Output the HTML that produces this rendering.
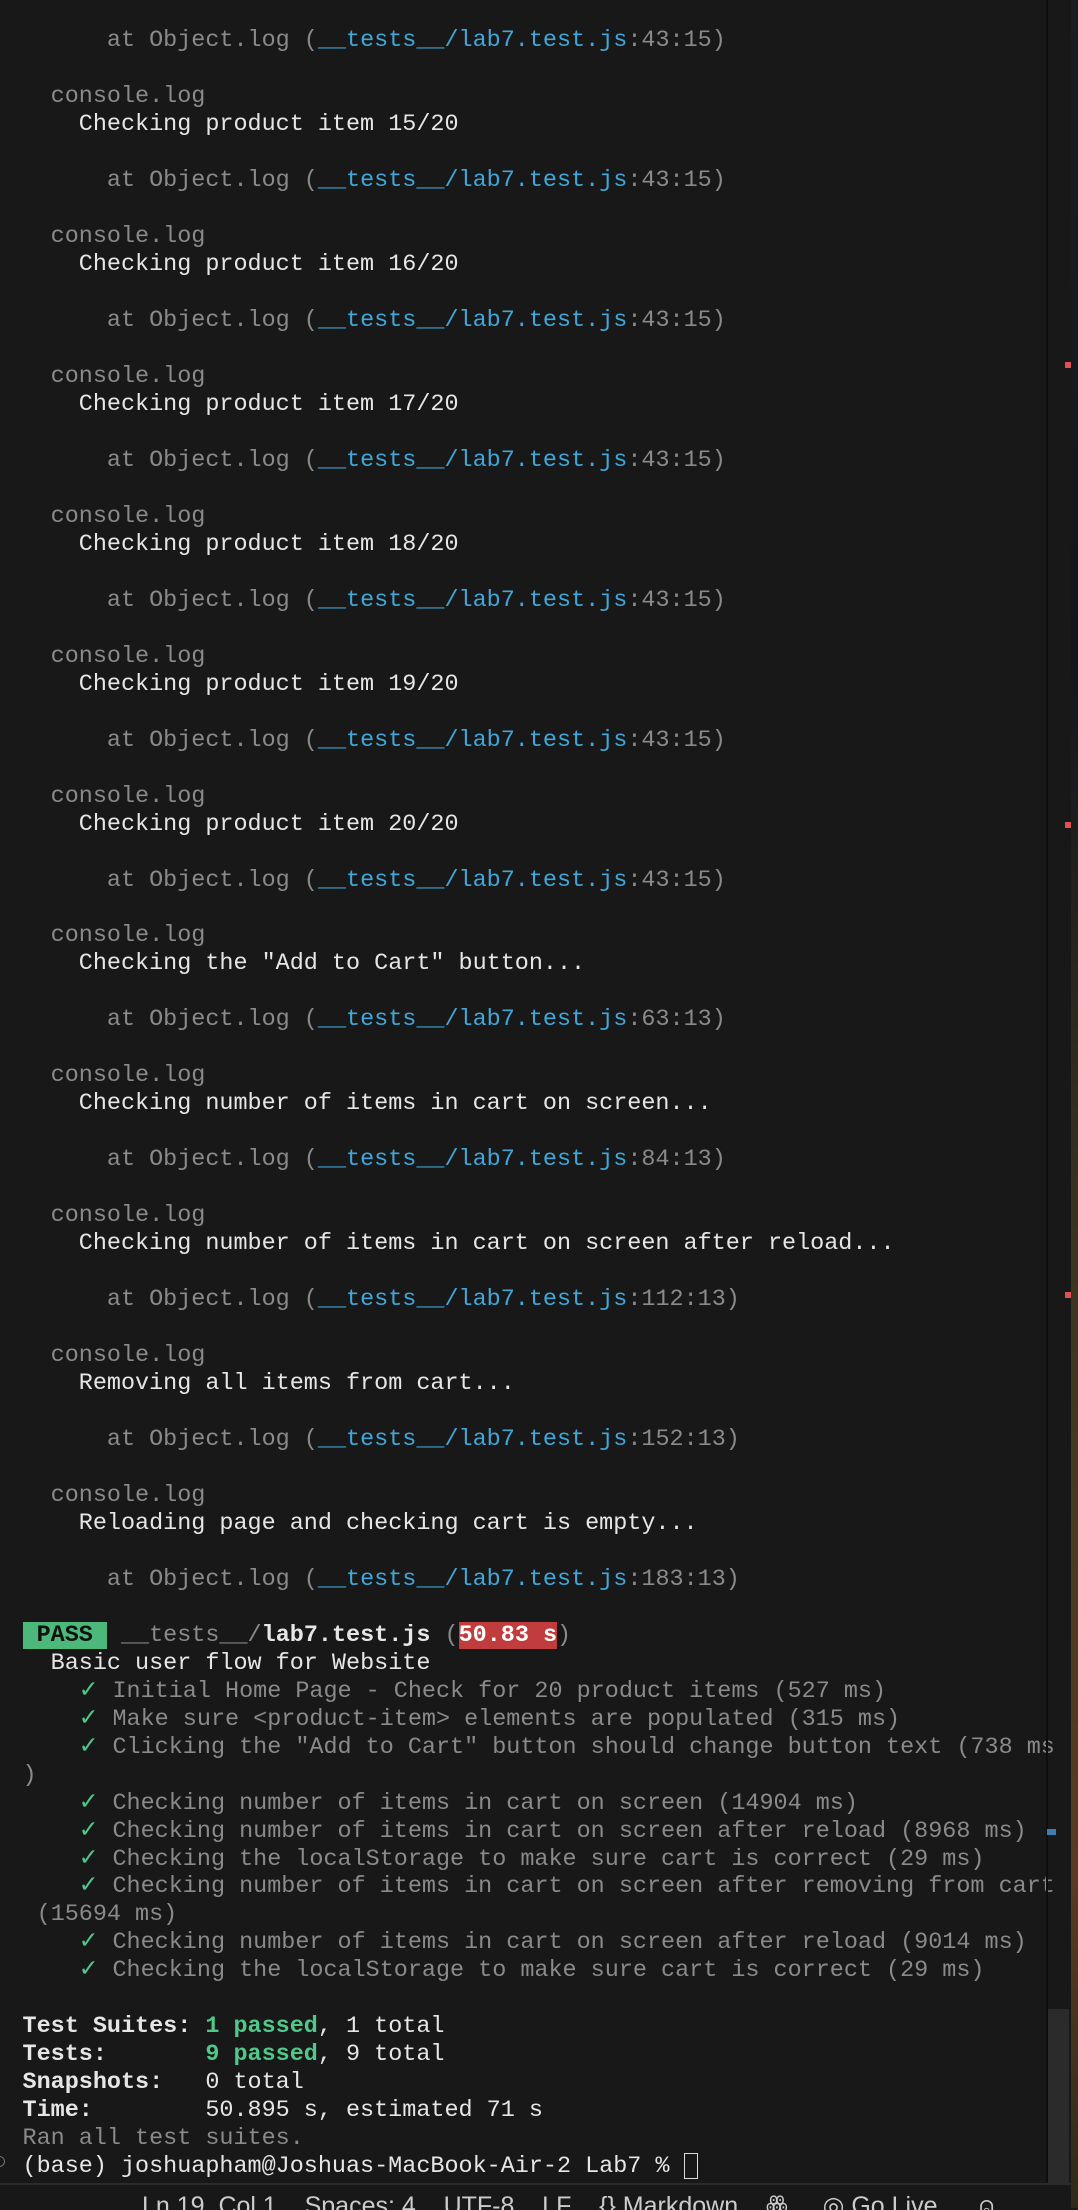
<!DOCTYPE html>
<html><head><meta charset="utf-8"><style>
html,body{margin:0;padding:0;}
body{width:1078px;height:2208px;background:#181818;position:relative;overflow:hidden;font-family:"Liberation Mono",monospace;font-size:23.45px;}
.l{position:absolute;left:22.5px;height:28px;line-height:28px;white-space:pre;color:#cccccc;}
.g{color:#8a8a8a}.w{color:#e6e6e6}.b{color:#3fa7d9}.gr{color:#4ec98a}.bd{font-weight:bold}
.pass{background:#4cb87a;color:#111;font-weight:bold}
.red{background:#c13c3c;color:#fff;font-weight:bold}
</style></head><body>
<div id="t"></div>
<div style="position:absolute;left:1046px;top:0;width:2px;height:2184px;background:#0e0e0e"></div>
<div style="position:absolute;left:1048px;top:2009px;width:21px;height:174px;background:#2b2b2b"></div>
<div style="position:absolute;left:1065px;top:362px;width:7px;height:6px;background:#e05252"></div>
<div style="position:absolute;left:1065px;top:822px;width:7px;height:6px;background:#e05252"></div>
<div style="position:absolute;left:1065px;top:1292px;width:7px;height:6px;background:#e05252"></div>
<div style="position:absolute;left:1047px;top:1829px;width:9px;height:6px;background:#3a7fae"></div>
<div style="position:absolute;left:1071px;top:0;width:7px;height:2208px;background:linear-gradient(#1a1d22 0%,#12161c 30%,#3a3220 55%,#4a3a22 70%,#5a3a22 85%,#2e2a1a 100%)"></div>
<div style="position:absolute;left:0;top:2183px;width:1071px;height:25px;background:#181818;border-top:2px solid #2b2b2b;overflow:hidden">
<div style="position:absolute;left:142px;top:6px;height:30px;white-space:pre;color:#cccccc;font-family:'Liberation Sans',sans-serif;font-size:25px;line-height:30px">Ln 19, Col 1    Spaces: 4    UTF-8    LF    {} Markdown    ꙮ     ◎ Go Live      ⍝</div></div>
<script>
var L=[];
function at(p){return '      <span class="g">at Object.log (</span><span class="b">__tests__/lab7.test.js</span><span class="g">:'+p+')</span>';}
L.push(at('43:15'));L.push('');
var msgs=[['Checking product item 15/20','43:15'],['Checking product item 16/20','43:15'],['Checking product item 17/20','43:15'],['Checking product item 18/20','43:15'],['Checking product item 19/20','43:15'],['Checking product item 20/20','43:15'],['Checking the "Add to Cart" button...','63:13'],['Checking number of items in cart on screen...','84:13'],['Checking number of items in cart on screen after reload...','112:13'],['Removing all items from cart...','152:13'],['Reloading page and checking cart is empty...','183:13']];
function esc(s){return s.replace(/&/g,'&amp;').replace(/</g,'&lt;').replace(/>/g,'&gt;');}
msgs.forEach(function(m){L.push('  <span class="g">console.log</span>');L.push('    <span class="w">'+esc(m[0])+'</span>');L.push('');L.push(at(m[1]));L.push('');});
L.push('<span class="pass"> PASS </span> <span class="g">__tests__/</span><span class="w bd">lab7.test.js</span> <span class="g">(</span><span class="red">50.83 s</span><span class="g">)</span>');
L.push('  <span class="w">Basic user flow for Website</span>');
function t(s){return '    <span class="gr">✓</span> <span class="g">'+esc(s)+'</span>';}
L.push(t('Initial Home Page - Check for 20 product items (527 ms)'));
L.push(t('Make sure <product-item> elements are populated (315 ms)'));
L.push(t('Clicking the "Add to Cart" button should change button text (738 ms'));
L.push('<span class="g">)</span>');
L.push(t('Checking number of items in cart on screen (14904 ms)'));
L.push(t('Checking number of items in cart on screen after reload (8968 ms)'));
L.push(t('Checking the localStorage to make sure cart is correct (29 ms)'));
L.push(t('Checking number of items in cart on screen after removing from cart'));
L.push(' <span class="g">(15694 ms)</span>');
L.push(t('Checking number of items in cart on screen after reload (9014 ms)'));
L.push(t('Checking the localStorage to make sure cart is correct (29 ms)'));
L.push('');
L.push('<span class="w bd">Test Suites: </span><span class="gr bd">1 passed</span><span class="w">, 1 total</span>');
L.push('<span class="w bd">Tests:       </span><span class="gr bd">9 passed</span><span class="w">, 9 total</span>');
L.push('<span class="w bd">Snapshots:   </span><span class="w">0 total</span>');
L.push('<span class="w bd">Time:        </span><span class="w">50.895 s, estimated 71 s</span>');
L.push('<span class="g">Ran all test suites.</span>');
L.push('<span class="w">(base) joshuapham@Joshuas-MacBook-Air-2 Lab7 % </span><span style="display:inline-block;width:12px;height:24px;border:1.5px solid #ddd;vertical-align:middle"></span>');
var h='';
L.forEach(function(s,i){h+='<div class="l" style="top:'+(27.4+27.97*i).toFixed(1)+'px">'+s+'</div>';});
h+='<div style="position:absolute;left:-6px;top:2156px;width:9px;height:9px;border:1.5px solid #777;border-radius:50%"></div>';
document.getElementById('t').innerHTML=h;
</script>
</body></html>
